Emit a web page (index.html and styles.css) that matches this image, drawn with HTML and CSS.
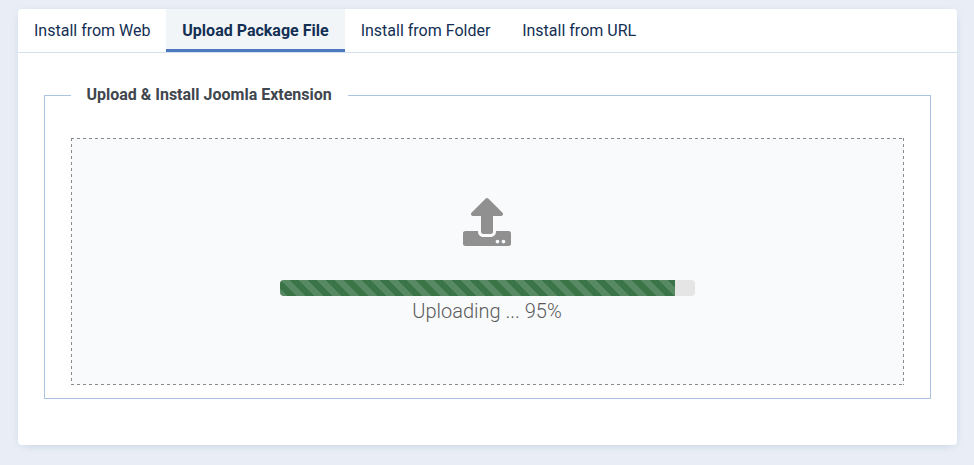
FILE: index.html
```
<!DOCTYPE html>
<html lang="en">

<head>
    <meta charset="UTF-8">
    <meta name="viewport" content="width=device-width, initial-scale=1.0">
    <title>Install Extensions</title>
    <link rel="stylesheet" href="styles.css">
</head>

<body>
    <div class="card">
        <div class="tabs" role="tablist">
            <button class="tab" role="tab">Install from Web</button>
            <button class="tab active" role="tab">Upload Package File</button>
            <button class="tab" role="tab">Install from Folder</button>
            <button class="tab" role="tab">Install from URL</button>
        </div>

        <fieldset class="upload-form">
            <legend>Upload &amp; Install Joomla Extension</legend>
            <div class="dragarea">
                <svg class="upload-icon" viewBox="0 0 512 512" aria-hidden="true">
                    <path d="M296 384h-80c-13.3 0-24-10.7-24-24V192h-87.7c-17.8 0-26.7-21.5-14.1-34.1L242.3 5.7c7.5-7.5 19.8-7.5 27.3 0l152.2 152.2c12.6 12.6 3.7 34.1-14.1 34.1H320v168c0 13.3-10.7 24-24 24zm216-8v112c0 13.3-10.7 24-24 24H24c-13.3 0-24-10.7-24-24V376c0-13.3 10.7-24 24-24h136v8c0 30.9 25.1 56 56 56h80c30.9 0 56-25.1 56-56v-8h136c13.3 0 24 10.7 24 24zm-124 88c0-11-9-20-20-20s-20 9-20 20 9 20 20 20 20-9 20-20zm64 0c0-11-9-20-20-20s-20 9-20 20 9 20 20 20 20-9 20-20z"/>
                </svg>
                <div class="progress">
                    <div class="progress-bar" style="width: 95.2%"></div>
                </div>
                <p class="lead">Uploading ... 95%</p>
            </div>
        </fieldset>
    </div>
</body>

</html>
```

FILE: styles.css
```
* {
    box-sizing: border-box;
}

body {
    margin: 0;
    padding: 9px 17px 20px 18px;
    height: 465px;
    background-color: #e9eef6;
    font-family: Roboto, "Liberation Sans", sans-serif;
    font-size: 16px;
    line-height: 24px;
}

.card {
    height: 436px;
    background-color: #fff;
    border-radius: 4px;
    box-shadow: 0 2px 10px -4px rgba(40, 90, 140, 0.3);
}

/* Tabs */
.tabs {
    display: flex;
    height: 44px;
    border-bottom: 1px solid #d4e0f0;
}

.tab {
    padding: 0 15.8px 0 16px;
    border: 0;
    background: none;
    color: #132f53;
    font: inherit;
    cursor: pointer;
}

.tab.active {
    padding: 3px 16.1px 0 16px;
    background-color: #f1f5f8;
    border-bottom: 3px solid #4d7abf;
    font-weight: 700;
}

/* Upload form */
.upload-form {
    height: 316px;
    margin: 30px 26px 0;
    padding: 31px 26px 13px;
    border: 1px solid #abc4df;
}

.upload-form legend {
    padding: 0 16px 0 15.4px;
    color: #40464d;
    font-weight: 700;
}

/* Dashed outline with 3px dashes and 3px gaps */
.dragarea {
    display: flex;
    flex-direction: column;
    align-items: center;
    height: 247px;
    padding-top: 60px;
    background-color: #f9fafc;
    background-image:
        linear-gradient(90deg, #8a8a8a 50%, transparent 50%),
        linear-gradient(90deg, #8a8a8a 50%, transparent 50%),
        linear-gradient(#8a8a8a 50%, transparent 50%),
        linear-gradient(#8a8a8a 50%, transparent 50%);
    background-position: left top, left bottom, left top, right top;
    background-repeat: repeat-x, repeat-x, repeat-y, repeat-y;
    background-size: 6px 1px, 6px 1px, 1px 6px, 1px 6px;
}

.upload-icon {
    width: 48px;
    height: 48px;
    margin-right: 1px;
    fill: #909090;
}

/* Progress bar */
.progress {
    width: 415px;
    height: 16px;
    margin-top: 34px;
    background-color: #e5e5e5;
    border-radius: 4px;
    overflow: hidden;
}

.progress-bar {
    height: 100%;
    background-color: #3a7447;
    background-image: linear-gradient(45deg, rgba(255, 255, 255, 0.15) 25%, transparent 25%, transparent 50%, rgba(255, 255, 255, 0.15) 50%, rgba(255, 255, 255, 0.15) 75%, transparent 75%, transparent);
    background-size: 18px 18px;
}

.lead {
    margin: 0 1px 0 0;
    color: #5a5a5a;
    font-size: 20px;
    font-weight: 300;
    line-height: 30px;
}
```
